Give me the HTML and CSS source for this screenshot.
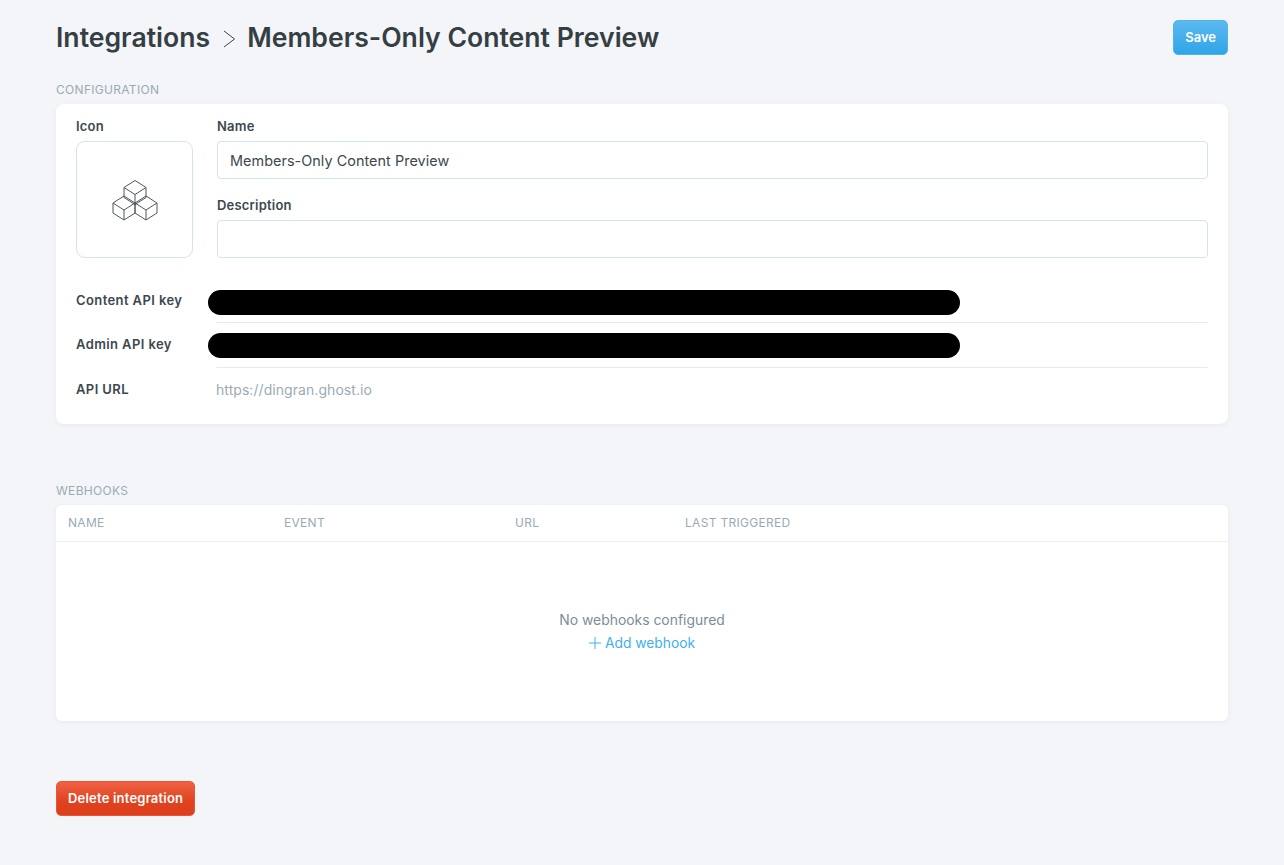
FILE: index.html
```html
<!DOCTYPE html>
<html lang="en">
<head>
<meta charset="utf-8">
<title>Integrations</title>
<link rel="stylesheet" href="styles.css">
</head>
<body>
<main class="page">
  <header class="topbar">
    <h1 class="crumbs">
      <span>Integrations</span>
      <svg class="crumb-arrow" viewBox="0 0 13 18" width="13" height="18" aria-hidden="true"><path d="M2 1l10.500 8-10.500 8" fill="none" stroke="#3a4449" stroke-width="1"/></svg>
      <span>Members-Only Content Preview</span>
    </h1>
    <button class="btn btn-blue">Save</button>
  </header>

  <h2 class="section-label label-config">CONFIGURATION</h2>
  <section class="card config">
    <div class="form-top">
      <div class="icon-col">
        <div class="field-label">Icon</div>
        <div class="icon-box">
          <svg class="cubes" viewBox="-1 0 45 40" width="45" height="40" fill="none" stroke="#4f575c" stroke-width="1" stroke-linejoin="round" aria-hidden="true">
            <path d="M22 .5l11 7v10l-11 7-11-7v-10z"/>
            <path d="M11 7.500l11 7 11-7M22 14.500v10"/>
            <path d="M11 16l11 7v10l-11 7-11-7v-10z"/>
            <path d="M0 23l11 7 11-7M11 30v10"/>
            <path d="M33 16l11 7v10l-11 7-11-7v-10z"/>
            <path d="M22 23l11 7 11-7M33 30v10"/>
          </svg>
        </div>
      </div>
      <div class="fields">
        <label class="field-label" for="name">Name</label>
        <input class="input" id="name" type="text" value="Members-Only Content Preview">
        <label class="field-label label-desc" for="desc">Description</label>
        <input class="input" id="desc" type="text">
      </div>
    </div>
    <div class="key-list">
      <div class="key-row">
        <div class="key-name">Content API key</div>
        <div class="redacted"></div>
      </div>
      <div class="key-row">
        <div class="key-name">Admin API key</div>
        <div class="redacted"></div>
      </div>
      <div class="key-row key-last">
        <div class="key-name">API URL</div>
        <div class="key-value">https://dingran.ghost.io</div>
      </div>
    </div>
  </section>

  <h2 class="section-label label-hooks">WEBHOOKS</h2>
  <section class="card hooks">
    <div class="hooks-head">
      <div>NAME</div>
      <div>EVENT</div>
      <div>URL</div>
      <div>LAST TRIGGERED</div>
    </div>
    <div class="hooks-empty">
      <p class="empty-text">No webhooks configured</p>
      <a class="add-link" href="#">
        <svg viewBox="0 0 12 12" width="12" height="12" aria-hidden="true"><path d="M6 0v12M0 6h12" stroke="#3eb0ef" stroke-width="1" fill="none"/></svg>
        <span>Add webhook</span>
      </a>
    </div>
  </section>

  <button class="btn btn-red">Delete integration</button>
</main>
</body>
</html>
```

FILE: styles.css
```css
* { box-sizing: border-box; }

html, body {
  margin: 0;
  background: #f4f5f8;
}

body {
  font-family: Inter, "Liberation Sans", sans-serif;
  color: #3c484e;
  height: 865px;
  overflow: hidden;
}

.page {
  padding: 20px 56px 0;
}

.topbar {
  display: flex;
  justify-content: space-between;
  align-items: flex-start;
  height: 35px;
}

.crumbs {
  margin: 0;
  display: flex;
  align-items: center;
  gap: 12px;
  height: 35px;
  font-size: 26.6px;
  font-weight: 600;
  line-height: 35px;
  color: #343f44;
}

.crumb-arrow { margin-top: 2px; }

.btn {
  display: block;
  border-radius: 5px;
  height: 35px;
  padding: 0 11px 2px;
  font-family: inherit;
  font-size: 13px;
  font-weight: 600;
  color: #fff;
}

.btn-blue {
  border: 1px solid #4fb3ee;
  background: linear-gradient(#5ab9f0, #2fa5e8);
}

.btn-red {
  margin-top: 60px;
  letter-spacing: 0.2px;
  border: 1px solid #e8553a;
  background: linear-gradient(#ef6244 0%, #e0421f 60%, #dd3f1c 100%);
}

.section-label {
  margin: 0;
  font-size: 12px;
  font-weight: 400;
  line-height: 14px;
  letter-spacing: 0.3px;
  color: #9aabb5;
}

.label-config { margin-top: 28px; }
.label-hooks { margin-top: 60px; }

.card {
  background: #fff;
  border-radius: 8px;
  box-shadow: 0 1px 4px rgba(130, 145, 160, 0.12);
}

.config {
  margin-top: 7px;
  height: 320px;
  padding: 14px 20px 0;
}

.form-top {
  display: flex;
  gap: 24px;
}

.icon-col { width: 117px; flex: none; }

.field-label {
  display: block;
  font-size: 13px;
  font-weight: 600;
  line-height: 16px;
  letter-spacing: 0.2px;
  color: #3c484e;
  margin-bottom: 7px;
}

.label-desc { margin-top: 18px; }

.icon-box {
  width: 117px;
  height: 117px;
  border: 1px solid #d5e3ec;
  border-radius: 9px;
  display: flex;
  align-items: center;
  justify-content: center;
}

.cubes { overflow: visible; }

.fields { flex: 1; min-width: 0; }

.input {
  display: block;
  width: 100%;
  height: 38px;
  padding: 0 12px;
  border: 1px solid #d5e3ec;
  border-radius: 4px;
  background: #fff;
  font-family: inherit;
  font-size: 14.4px;
  letter-spacing: 0.05px;
  color: #3c484e;
}

.key-list { margin-top: 22px; }

.key-row {
  display: flex;
  align-items: center;
  height: 45px;
  padding-bottom: 3px;
  position: relative;
}

.key-row:first-child { height: 43px; }

.key-row:not(.key-last)::after {
  content: "";
  position: absolute;
  left: 140px;
  right: 0;
  bottom: 0;
  border-bottom: 1px solid #e3ecf2;
}

.key-name {
  width: 140px;
  flex: none;
  font-size: 13px;
  font-weight: 600;
  letter-spacing: 0.4px;
  color: #3c484e;
}

.redacted {
  width: 752px;
  height: 25px;
  margin-left: -8px;
  margin-top: 5px;
  border-radius: 13px;
  background: #000;
}

.key-row:nth-child(2) .redacted { margin-top: 3px; }

.key-value {
  font-size: 14px;
  letter-spacing: 0.06px;
  color: #9aabb5;
}

.hooks {
  margin-top: 7px;
  height: 216px;
  border-radius: 6px;
}

.hooks-head {
  display: grid;
  grid-template-columns: 216px 231px 170px 1fr;
  align-items: center;
  height: 37px;
  padding: 0 12px 2px;
  border-bottom: 1px solid #e8f0f5;
  font-size: 12px;
  letter-spacing: 0.3px;
  color: #9aabb5;
}

.hooks-empty {
  display: flex;
  flex-direction: column;
  align-items: center;
  padding-top: 68px;
}

.empty-text {
  margin: 0;
  font-size: 13.9px;
  line-height: 20px;
  color: #7d8d95;
}

.add-link {
  display: flex;
  align-items: center;
  gap: 4px;
  margin-top: 3px;
  font-size: 13.8px;
  line-height: 20px;
  color: #3eb0ef;
  text-decoration: none;
}
```
